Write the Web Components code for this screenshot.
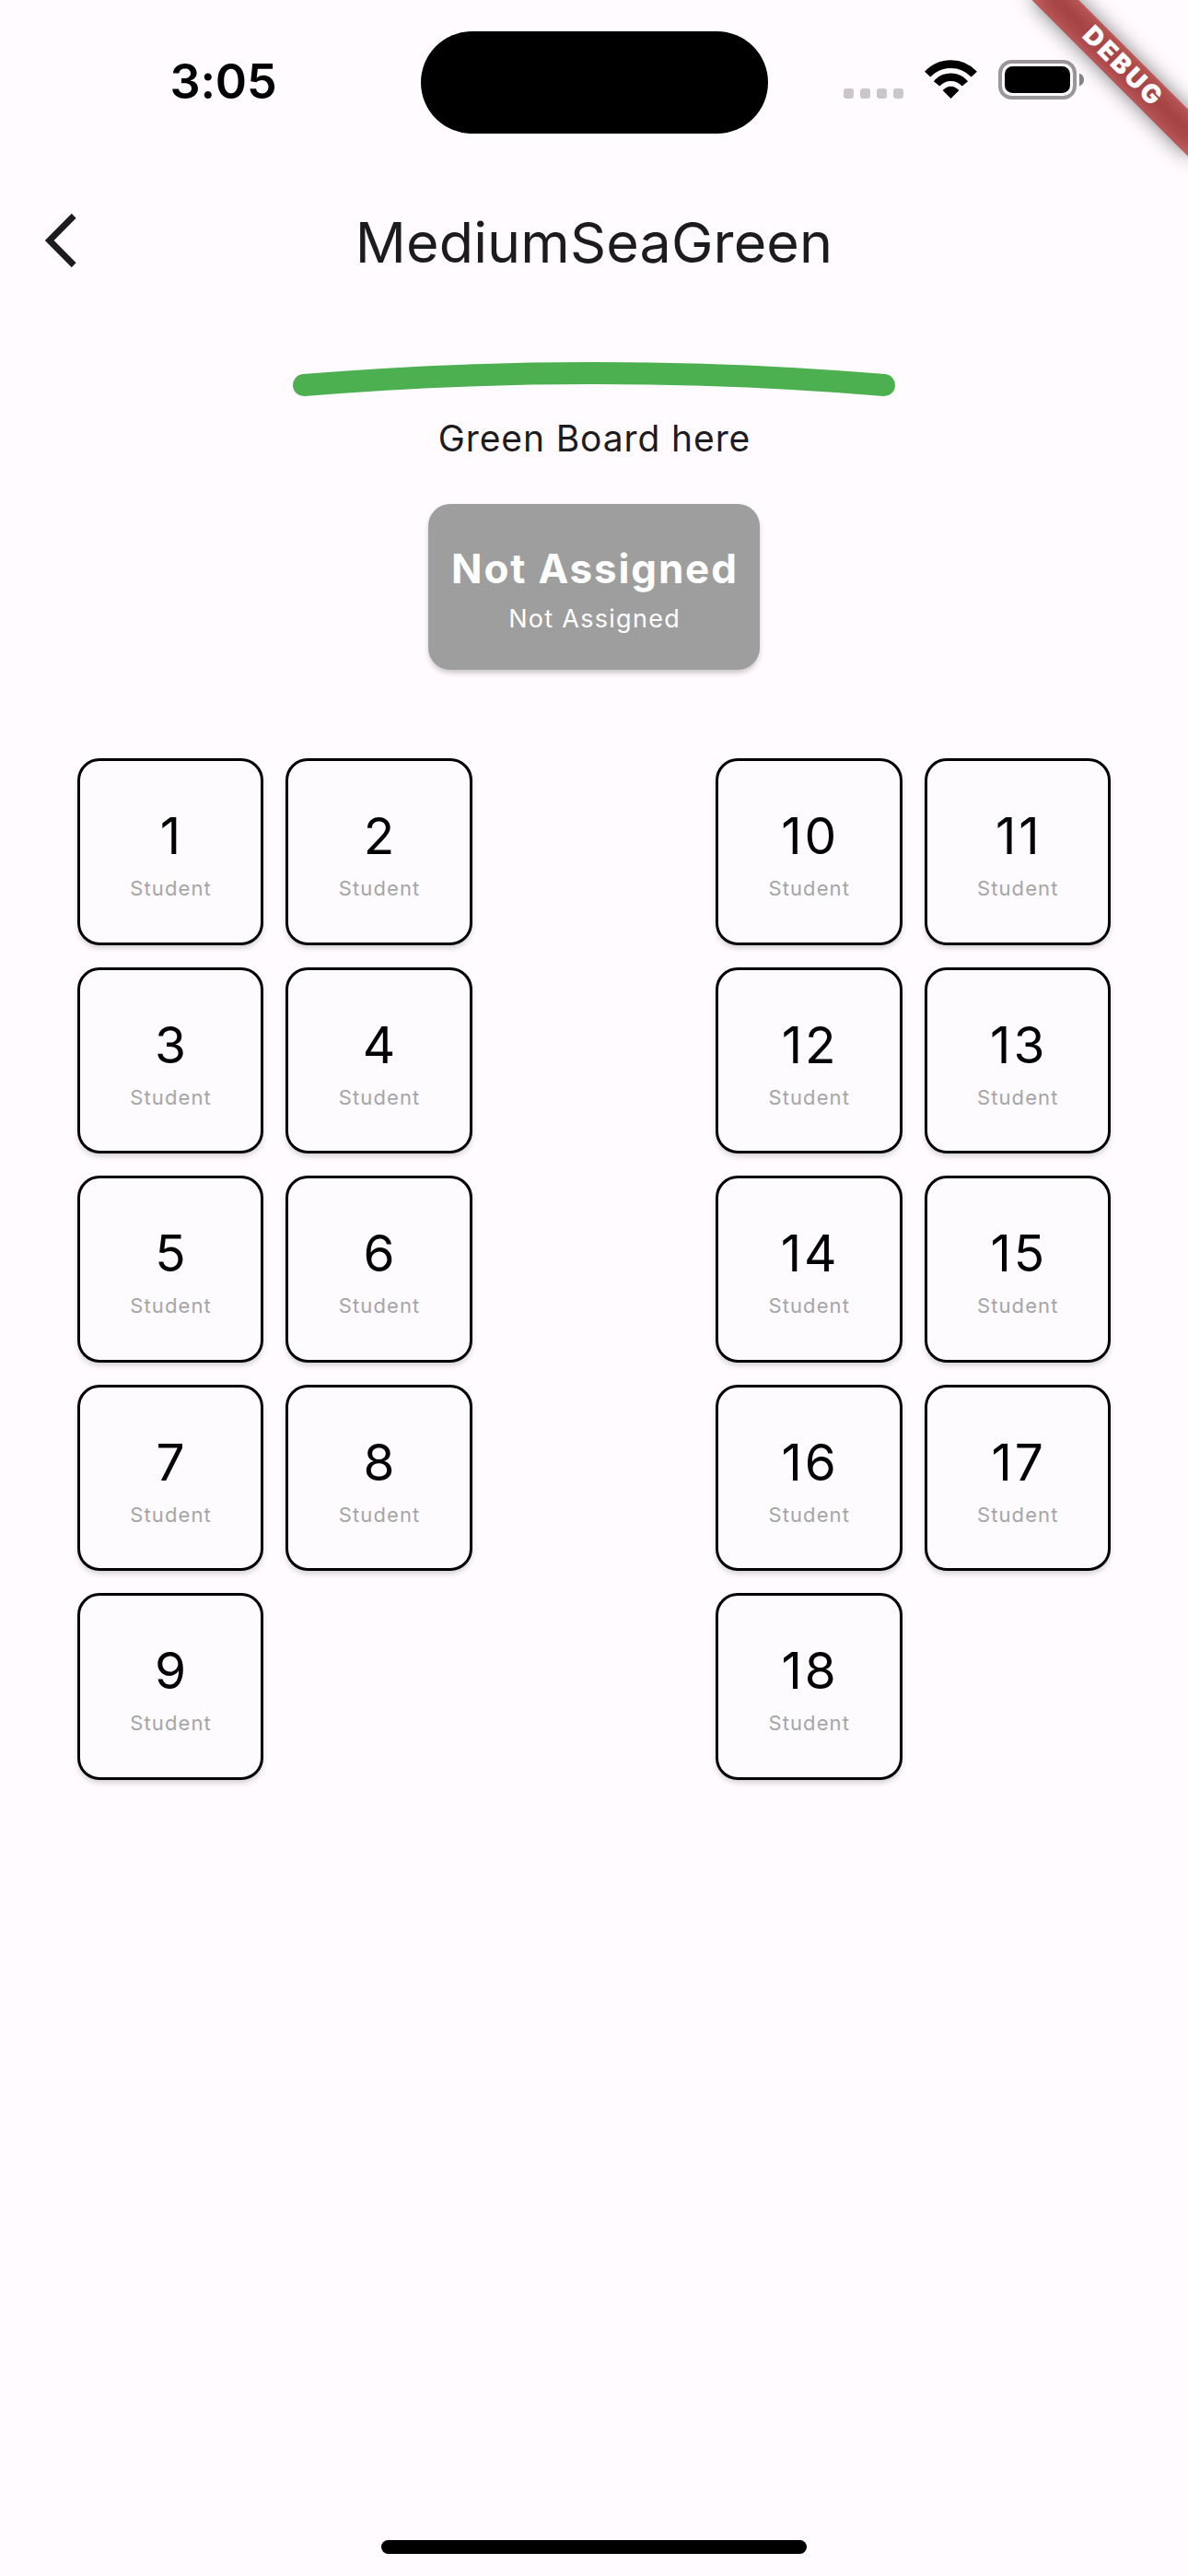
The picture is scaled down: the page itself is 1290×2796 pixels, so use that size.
<!DOCTYPE html>
<html lang="en">
<head>
<meta charset="utf-8">
<title>MediumSeaGreen</title>
<style>
  html, body { margin: 0; padding: 0; background: #fffbff; }
  body { font-family: Inter, "Liberation Sans", sans-serif; color: #1c1b1f; }
</style>
</head>
<body>
<class-screen></class-screen>
<script>
const define = (name, html, setup) => {
  const template = document.createElement('template');
  template.innerHTML = html;
  customElements.define(name, class extends HTMLElement {
    constructor() {
      super();
      this.attachShadow({ mode: 'open' }).append(template.content.cloneNode(true));
    }
    connectedCallback() { if (setup) setup(this, this.shadowRoot); }
  });
};

define('status-bar', `
  <style>
    :host { display: flex; align-items: center; height: 178px; color: #000; }
    .side { display: flex; box-sizing: border-box; align-items: center; }
    .left { width: 457px; padding-left: 28px; justify-content: center; }
    time { font-size: 52px; font-weight: 600; line-height: 60px; letter-spacing: -.19px; margin-bottom: 1px; }
    .island { width: 376.5px; height: 111px; border-radius: 56px; background: #000; }
    .right { padding-left: 82.5px; margin-bottom: 6px; }
    svg { display: block; }
    .wifi { margin-left: 23px; }
    .battery { margin-left: 22px; }
  </style>
  <div class="side left"><time>3:05</time></div>
  <div class="island"></div>
  <div class="side right">
    <svg width="65" height="44" fill="#cac7cb">
      <rect x="0" y="32" width="11" height="11" rx="3.2"/><rect x="18" y="32" width="11" height="11" rx="3.2"/>
      <rect x="36" y="32" width="11" height="11" rx="3.2"/><rect x="54" y="32" width="11" height="11" rx="3.2"/>
    </svg>
    <svg class="wifi" width="58" height="44" fill="none" stroke="#000">
      <path d="M3.2 16.7A34.4 34.4 0 0 1 53.8 16.7" stroke-width="8.6"/>
      <path d="M13.1 26.9A20.2 20.2 0 0 1 43.9 26.9" stroke-width="8.4"/>
      <path d="M28.5 43L19.6 33.9Q28.5 25.4 37.4 33.9Z" fill="#000" stroke="none"/>
    </svg>
    <svg class="battery" width="94" height="44">
      <rect x="2" y="3" width="81" height="39" rx="12.5" fill="none" stroke="#99979a" stroke-width="4"/>
      <rect x="7" y="8" width="71" height="29" rx="8.5"/>
      <path d="M88 15.5Q93 17.5 93 22.5T88 29.5Z" fill="#858386"/>
    </svg>
  </div>`);

define('debug-banner', `
  <style>
    :host { position: absolute; top: 0; right: 0; width: 300px; height: 300px; overflow: hidden; pointer-events: none; }
    svg { display: block; }
    text { font: 900 28px Inter, sans-serif; letter-spacing: 2.55px; }
  </style>
  <svg width="300" height="300">
    <defs><filter id="soft" x="-50%" y="-200%" width="200%" height="500%"><feGaussianBlur stdDeviation="11.4"/></filter></defs>
    <g transform="translate(300 0) rotate(45)">
      <rect x="-120" y="84" width="240" height="36" fill="#000" fill-opacity=".498" filter="url(#soft)"/>
      <rect x="-120" y="84" width="240" height="36" fill="#b71c1c" fill-opacity=".627"/>
      <text x="1.2" y="110.2" text-anchor="middle" fill="#fff">DEBUG</text>
    </g>
  </svg>`);

define('app-bar', `
  <style>
    :host { display: flex; align-items: center; height: 168px; margin-top: -1px; }
    .back, .end { display: block; flex: none; width: 168px; height: 168px; }
    h1 { flex: 1; margin: 4px 0 0; text-align: center; font-size: 61px; line-height: 80px; font-weight: 400; letter-spacing: .15px; }
  </style>
  <svg class="back" viewBox="0 0 168 168" fill="#1c1b1f"><path d="M82.6 59.7L77.8 54.8L48.8 84L77.8 113.2L82.6 108.3L58.6 84Z"/></svg>
  <h1><slot></slot></h1>
  <span class="end"></span>`);

define('class-board', `
  <style>
    :host { display: flex; flex-direction: column; align-items: center; }
    svg { display: block; }
    p { margin: 14px 0 0; padding-left: 1px; font-size: 39px; font-weight: 400; line-height: 54px; letter-spacing: .89px; }
  </style>
  <svg width="670" height="90" viewBox="310 345 670 90">
    <path d="M330 418Q645 392 960 418" fill="none" stroke="#4caf50" stroke-width="24" stroke-linecap="round"/>
  </svg>
  <p><slot></slot></p>`);

define('teacher-card', `
  <style>
    :host { display: flex; flex-direction: column; align-items: center; align-self: center; box-sizing: border-box;
      width: 360px; height: 180px; margin-top: 44px; padding-top: 40px; border-radius: 24px;
      background: #9e9e9e; color: #fff; box-shadow: 0 4px 6px -1px rgba(0,0,0,.24); }
    b { font-size: 44px; line-height: 60px; font-weight: 700; letter-spacing: 1.82px; margin-right: -1.8px; }
    span { margin-top: 6.5px; font-size: 27px; font-weight: 400; line-height: 36px; letter-spacing: 1.28px; margin-right: -1.3px; }
  </style>
  <b><slot name="name"></slot></b><span><slot name="role"></slot></span>`);

define('student-seat', `
  <style>
    :host { display: flex; flex-direction: column; align-items: center; box-sizing: border-box;
      width: 202.5px; height: 202.5px; padding-top: 51.3px; border: 3px solid #000; border-radius: 24px;
      background: #fdfbfe; box-shadow: 0 4px 6px -1px rgba(0,0,0,.18); }
    b { font-size: 55px; line-height: 60px; font-weight: 400; letter-spacing: 2.9px; margin-right: -2.9px; color: #000; font-kerning: none; }
    span { margin-top: 12px; font-size: 22px; font-weight: 400; line-height: 30px; letter-spacing: 1.1px; margin-right: -1px; color: #a6a5a7; }
  </style>
  <b></b><span><slot></slot></span>`,
  (host, root) => { root.querySelector('b').textContent = host.getAttribute('number'); });

define('seat-block', `
  <style>
    :host { display: grid; grid-template-columns: repeat(2, 202.5px); grid-auto-rows: 202.5px; gap: 24px; }
  </style>
  <slot></slot>`,
  (host) => {
    const from = +host.getAttribute('from'), to = +host.getAttribute('to');
    for (let n = from; n <= to; n++) {
      const seat = document.createElement('student-seat');
      seat.setAttribute('number', n);
      seat.textContent = 'Student';
      host.append(seat);
    }
  });

define('home-indicator', `
  <style>
    :host { display: block; width: 462px; height: 15px; border-radius: 8px; background: #000; margin: auto auto 24px; }
  </style>`);

define('class-screen', `
  <style>
    :host { position: relative; display: flex; flex-direction: column; width: 1290px; height: 2796px; overflow: hidden; background: #fffbff; }
    .seats { display: flex; justify-content: space-between; margin: 96px 84px 0 83.8px; }
  </style>
  <status-bar></status-bar>
  <app-bar>MediumSeaGreen</app-bar>
  <class-board>Green Board here</class-board>
  <teacher-card><span slot="name">Not Assigned</span><span slot="role">Not Assigned</span></teacher-card>
  <div class="seats">
    <seat-block from="1" to="9"></seat-block>
    <seat-block from="10" to="18"></seat-block>
  </div>
  <home-indicator></home-indicator>
  <debug-banner></debug-banner>`);
</script>
</body>
</html>
